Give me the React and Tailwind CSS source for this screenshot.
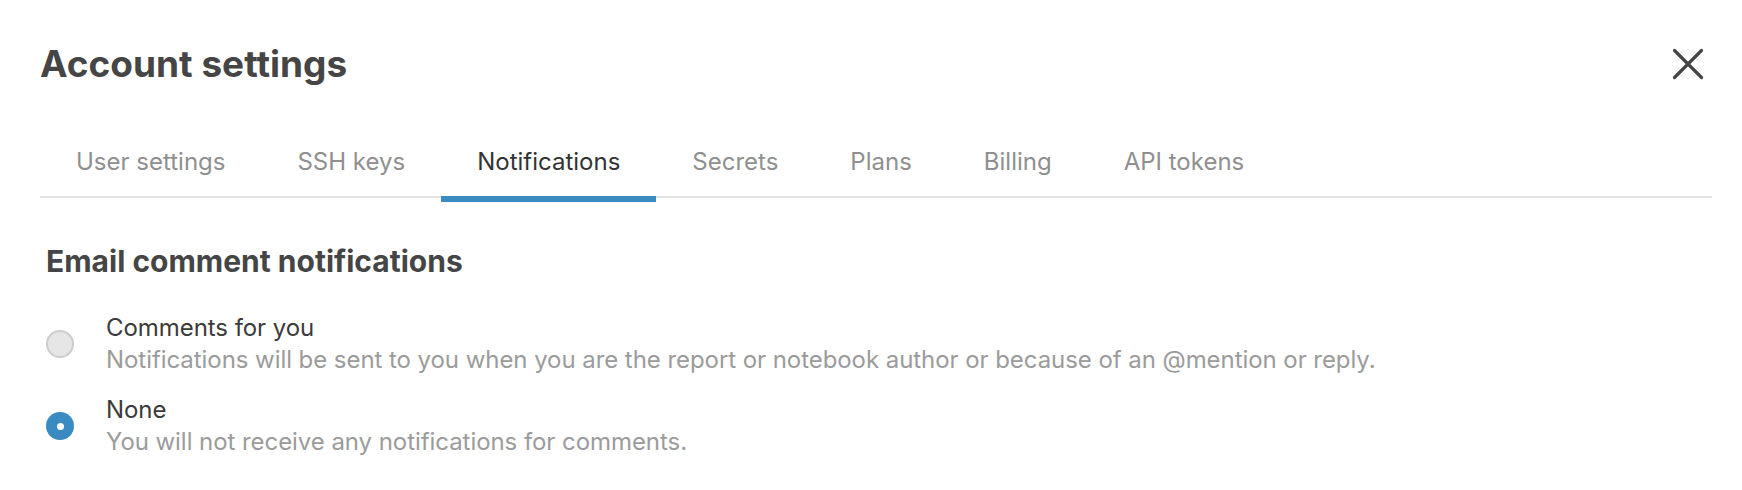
import { useState } from 'react'

const tabs = ['User settings', 'SSH keys', 'Notifications', 'Secrets', 'Plans', 'Billing', 'API tokens']

const options = [
  {
    id: 'mine',
    label: 'Comments for you',
    hint: 'Notifications will be sent to you when you are the report or notebook author or because of an @mention or reply.',
  },
  {
    id: 'none',
    label: 'None',
    hint: 'You will not receive any notifications for comments.',
  },
]

function CloseIcon() {
  return (
    <svg width="32" height="32" viewBox="0 0 32 32" fill="none" className="text-[#454545]">
      <path d="M2.5 2.5 L29.5 29.5 M29.5 2.5 L2.5 29.5" stroke="currentColor" strokeWidth="3.2" strokeLinecap="round" />
    </svg>
  )
}

function Radio({ checked }) {
  if (checked) {
    return (
      <span className="flex h-[28px] w-[28px] shrink-0 items-center justify-center rounded-full bg-[#3a8bc1]">
        <span className="h-[7px] w-[7px] rounded-full bg-white" />
      </span>
    )
  }
  return <span className="h-[28px] w-[28px] shrink-0 rounded-full border-2 border-[#cdcdcd] bg-[#e6e6e6]" />
}

export default function App() {
  const [active, setActive] = useState('Notifications')
  const [choice, setChoice] = useState('none')

  return (
    <div className="min-h-[490px] bg-white pl-[40px] pr-[30px] pt-[42px] font-['Inter',sans-serif]">
      <div className="flex items-center justify-between">
        <h1 className="text-[37px] font-bold leading-[44px] text-[#454545]">Account settings</h1>
        <button className="mr-[8px] p-0">
          <CloseIcon />
        </button>
      </div>

      <div className="mt-[60px] flex border-b-2 border-[#e3e3e3]">
        {tabs.map((t) => (
          <button
            key={t}
            onClick={() => setActive(t)}
            className={
              'relative px-[36px] pb-[18px] text-[24px] leading-[32px] ' +
              (t === active ? 'text-[#333333]' : 'text-[#8f8f8f]')
            }
          >
            {t}
            {t === active && <span className="absolute left-0 right-0 top-full z-10 h-[6px] bg-[#3a8bc1]" />}
          </button>
        ))}
      </div>

      <div className="pl-[6px] pt-[45px]">
        <h2 className="text-[30px] font-bold leading-[36px] text-[#454545]">Email comment notifications</h2>

        <div className="mt-[33px] flex flex-col gap-[18px]">
          {options.map((o) => (
            <label key={o.id} className="flex cursor-pointer items-center gap-[32px]" onClick={() => setChoice(o.id)}>
              <Radio checked={choice === o.id} />
              <div className="text-[24px] leading-[32px] tracking-[-0.06px]">
                <div className="text-[#3b3b3b]">{o.label}</div>
                <div className="text-[#9b9b9b]">{o.hint}</div>
              </div>
            </label>
          ))}
        </div>
      </div>
    </div>
  )
}
